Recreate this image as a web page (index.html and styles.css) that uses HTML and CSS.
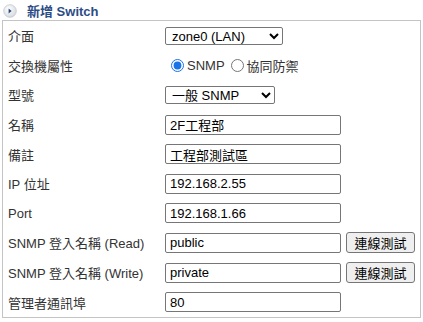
FILE: index.html
```html
<!DOCTYPE html>
<html>
<head>
<meta charset="utf-8">
<link rel="stylesheet" href="styles.css">
</head>
<body>
<div class="head">
  <span class="icon"><svg width="14" height="14" viewBox="0 0 14 14"><defs><radialGradient id="g" cx="0.4" cy="0.35" r="0.7"><stop offset="0" stop-color="#ffffff"/><stop offset="1" stop-color="#d4d8de"/></radialGradient></defs><circle cx="7" cy="7" r="6.3" fill="url(#g)" stroke="#c3c7cc" stroke-width="0.8"/><path d="M5.6 4.6 L8.6 7 L5.6 9.4 Z" fill="#24477a"/></svg></span>
  <span class="title">新增 Switch</span>
</div>
<div class="box">
  <div class="row"><div class="lbl">介面</div><div class="ctl"><select class="sel sel1"><option>zone0 (LAN)</option></select></div></div>
  <div class="row"><div class="lbl">交換機屬性</div><div class="ctl radios"><label class="rl"><input type="radio" name="t" checked>SNMP</label><label class="rl"><input type="radio" name="t">協同防禦</label></div></div>
  <div class="row"><div class="lbl">型號</div><div class="ctl"><select class="sel sel2"><option>一般 SNMP</option></select></div></div>
  <div class="row"><div class="lbl">名稱</div><div class="ctl"><input class="txt" type="text" value="2F工程部"></div></div>
  <div class="row"><div class="lbl">備註</div><div class="ctl"><input class="txt" type="text" value="工程部測試區"></div></div>
  <div class="row"><div class="lbl">IP 位址</div><div class="ctl"><input class="txt" type="text" value="192.168.2.55"></div></div>
  <div class="row"><div class="lbl">Port</div><div class="ctl"><input class="txt" type="text" value="192.168.1.66"></div></div>
  <div class="row"><div class="lbl">SNMP 登入名稱 (Read)</div><div class="ctl"><input class="txt" type="text" value="public"><button class="btn">連線測試</button></div></div>
  <div class="row"><div class="lbl">SNMP 登入名稱 (Write)</div><div class="ctl"><input class="txt" type="text" value="private"><button class="btn">連線測試</button></div></div>
  <div class="row"><div class="lbl">管理者通訊埠</div><div class="ctl"><input class="txt" type="text" value="80"></div></div>
</div>
</body>
</html>
```
FILE: styles.css
```css
html, body { margin: 0; padding: 0; background: #fff; }
body {
  font-family: "Liberation Sans", Arial, "Noto Sans CJK TC", sans-serif;
  font-size: 13px;
  color: #333;
}
.head {
  height: 20px;
  display: flex;
  align-items: center;
  padding-left: 3px;
}
.icon { display: flex; width: 14px; height: 14px; margin-top: 2px; }
.title {
  margin-left: 10px;
  font-weight: bold;
  font-size: 13px;
  color: #2c4c86;
  margin-top: 1px;
}
.box {
  margin-left: 2px;
  width: 417px;
  border: 1px solid #c4c4c4;
  box-sizing: content-box;
}
.row {
  height: 29.6px;
  display: grid;
  grid-template-columns: 162px 1fr;
  align-items: center;
}
.lbl { padding-left: 5px; color: #333; white-space: nowrap; }
.ctl { display: flex; align-items: center; }
.sel {
  font-family: "Liberation Sans", Arial, "Noto Sans CJK TC", sans-serif;
  font-size: 13px;
  color: #000;
  height: 18px;
  border: 1px solid #767676;
  border-radius: 2px;
  background: #fff;
  padding: 0 0 0 2px;
}
.sel1 { width: 118px; }
.sel2 { width: 110px; }
.txt {
  font-family: "Liberation Sans", Arial, "Noto Sans CJK TC", sans-serif;
  font-size: 13px;
  color: #000;
  width: 176px;
  height: 20px;
  box-sizing: border-box;
  border: 1px solid #767676;
  border-radius: 2px;
  padding: 0 4px;
  margin: 0;
}
.btn {
  font-family: "Liberation Sans", Arial, "Noto Sans CJK TC", sans-serif;
  font-size: 13px;
  color: #000;
  margin-left: 5px;
  width: 69px;
  height: 21px;
  padding: 0;
  background: #efefef;
  border: 1px solid #767676;
  border-radius: 3px;
}
.radios { padding-left: 4px; gap: 4px; }
.rl { display: flex; align-items: center; color: #333; }
.rl input { margin: 0 3px 0 2px; width: 13px; height: 13px; accent-color: #1a73e8; }
```
